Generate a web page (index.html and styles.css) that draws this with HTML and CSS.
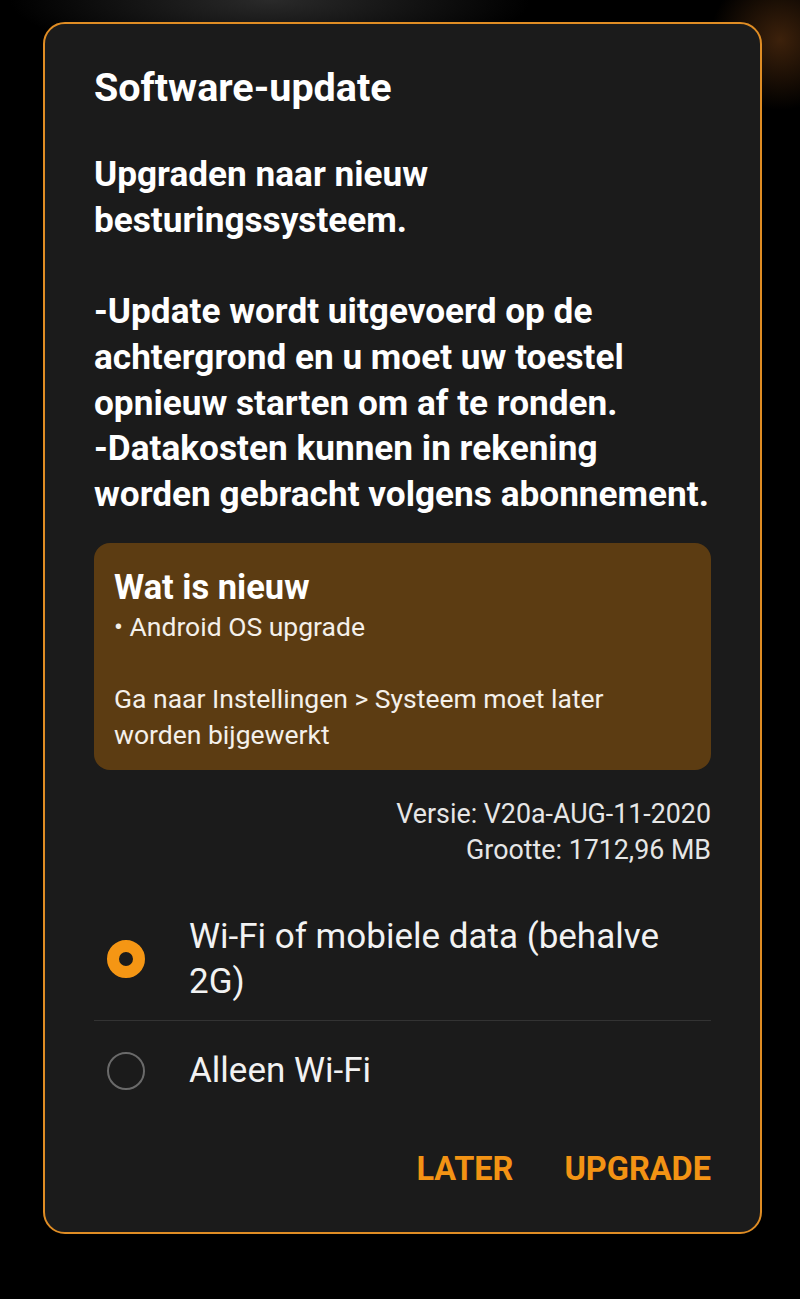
FILE: index.html
```html
<!DOCTYPE html>
<html lang="nl">
<head>
    <meta charset="UTF-8">
    <meta name="viewport" content="width=device-width, initial-scale=1.0">
    <title>Software-update</title>
    <link rel="stylesheet" href="styles.css">
</head>
<body>
    <div class="dialog">
        <div class="dialog-title">Software-update</div>

        <div class="message">
            <p>Upgraden naar nieuw besturingssysteem.</p>
            <p>-Update wordt uitgevoerd op de achtergrond en u moet uw toestel opnieuw starten om af te ronden.<br>-Datakosten kunnen in rekening worden gebracht volgens abonnement.</p>
        </div>

        <div class="whats-new">
            <div class="whats-new-title">Wat is nieuw</div>
            <div class="whats-new-text">• Android OS upgrade</div>
            <div class="whats-new-text spaced">Ga naar Instellingen &gt; Systeem moet later worden bijgewerkt</div>
        </div>

        <div class="meta">
            <div>Versie: V20a-AUG-11-2020</div>
            <div>Grootte: 1712,96 MB</div>
        </div>

        <div class="options">
            <label class="option">
                <span class="radio checked"></span>
                <span class="option-label">Wi-Fi of mobiele data (behalve 2G)</span>
            </label>
            <label class="option">
                <span class="radio"></span>
                <span class="option-label">Alleen Wi-Fi</span>
            </label>
        </div>

        <div class="actions">
            <button class="action-btn">LATER</button>
            <button class="action-btn">UPGRADE</button>
        </div>
    </div>
</body>
</html>
```

FILE: styles.css
```css
body {
    margin: 0;
    font-family: Roboto, "Noto Sans", Arial, sans-serif;
    color: #ffffff;
    height: 1299px;
    overflow: hidden;
    background-color: #000000;
    background-image:
        radial-gradient(ellipse 260px 60px at 270px 0px, rgba(60, 60, 60, 0.7), rgba(0, 0, 0, 0) 100%),
        radial-gradient(circle 70px at 780px 40px, rgba(110, 60, 20, 0.55), rgba(0, 0, 0, 0) 100%);
    background-repeat: no-repeat;
}

.dialog {
    box-sizing: border-box;
    margin: 22px 0 0 43px;
    width: 719px;
    height: 1212px;
    background-color: #1b1b1b;
    border: 2px solid #e08d24;
    border-radius: 22px;
    padding: 39px 49px 0 49px;
}

.dialog-title {
    font-size: 39.5px;
    font-weight: bold;
    line-height: 50px;
    margin-bottom: 39px;
}

.message {
    font-size: 35.2px;
    font-weight: bold;
    line-height: 45.7px;
    margin-right: -12px;
}

.message p {
    margin: 0 0 45.7px 0;
}

.message p:last-child {
    margin-bottom: 0;
}

.whats-new {
    margin-top: 25px;
    background-color: #5c3c12;
    border-radius: 16px;
    padding: 22px 40px 17px 20px;
}

.whats-new-title {
    font-size: 34.5px;
    font-weight: bold;
    line-height: 44px;
}

.whats-new-text {
    font-size: 26.5px;
    line-height: 36px;
    color: #f4f0ea;
}

.whats-new-text.spaced {
    margin-top: 36px;
}

.meta {
    margin-top: 26px;
    text-align: right;
    font-size: 26.8px;
    line-height: 36px;
    color: #e6e6e6;
}

.options {
    margin-top: 30px;
}

.option {
    box-sizing: border-box;
    display: flex;
    align-items: center;
    min-height: 100px;
    padding: 16px 0;
    border-bottom: 1px solid #333333;
}

.option:last-child {
    border-bottom: none;
}

.radio {
    box-sizing: border-box;
    flex: none;
    width: 38px;
    height: 38px;
    border-radius: 50%;
    border: 2px solid #6a6a6a;
    margin: 0 44px 0 13px;
}

.radio.checked {
    border: 12px solid #f59614;
}

.option-label {
    font-size: 35px;
    line-height: 45px;
    color: #f2f2f2;
    padding-right: 30px;
}

.actions {
    display: flex;
    justify-content: flex-end;
    margin-top: 28px;
}

.action-btn {
    background: none;
    border: none;
    padding: 0;
    margin-left: 51px;
    font-family: Roboto, Arial, sans-serif;
    font-size: 32.5px;
    font-weight: bold;
    line-height: 40px;
    color: #f39314;
    cursor: pointer;
}
```
